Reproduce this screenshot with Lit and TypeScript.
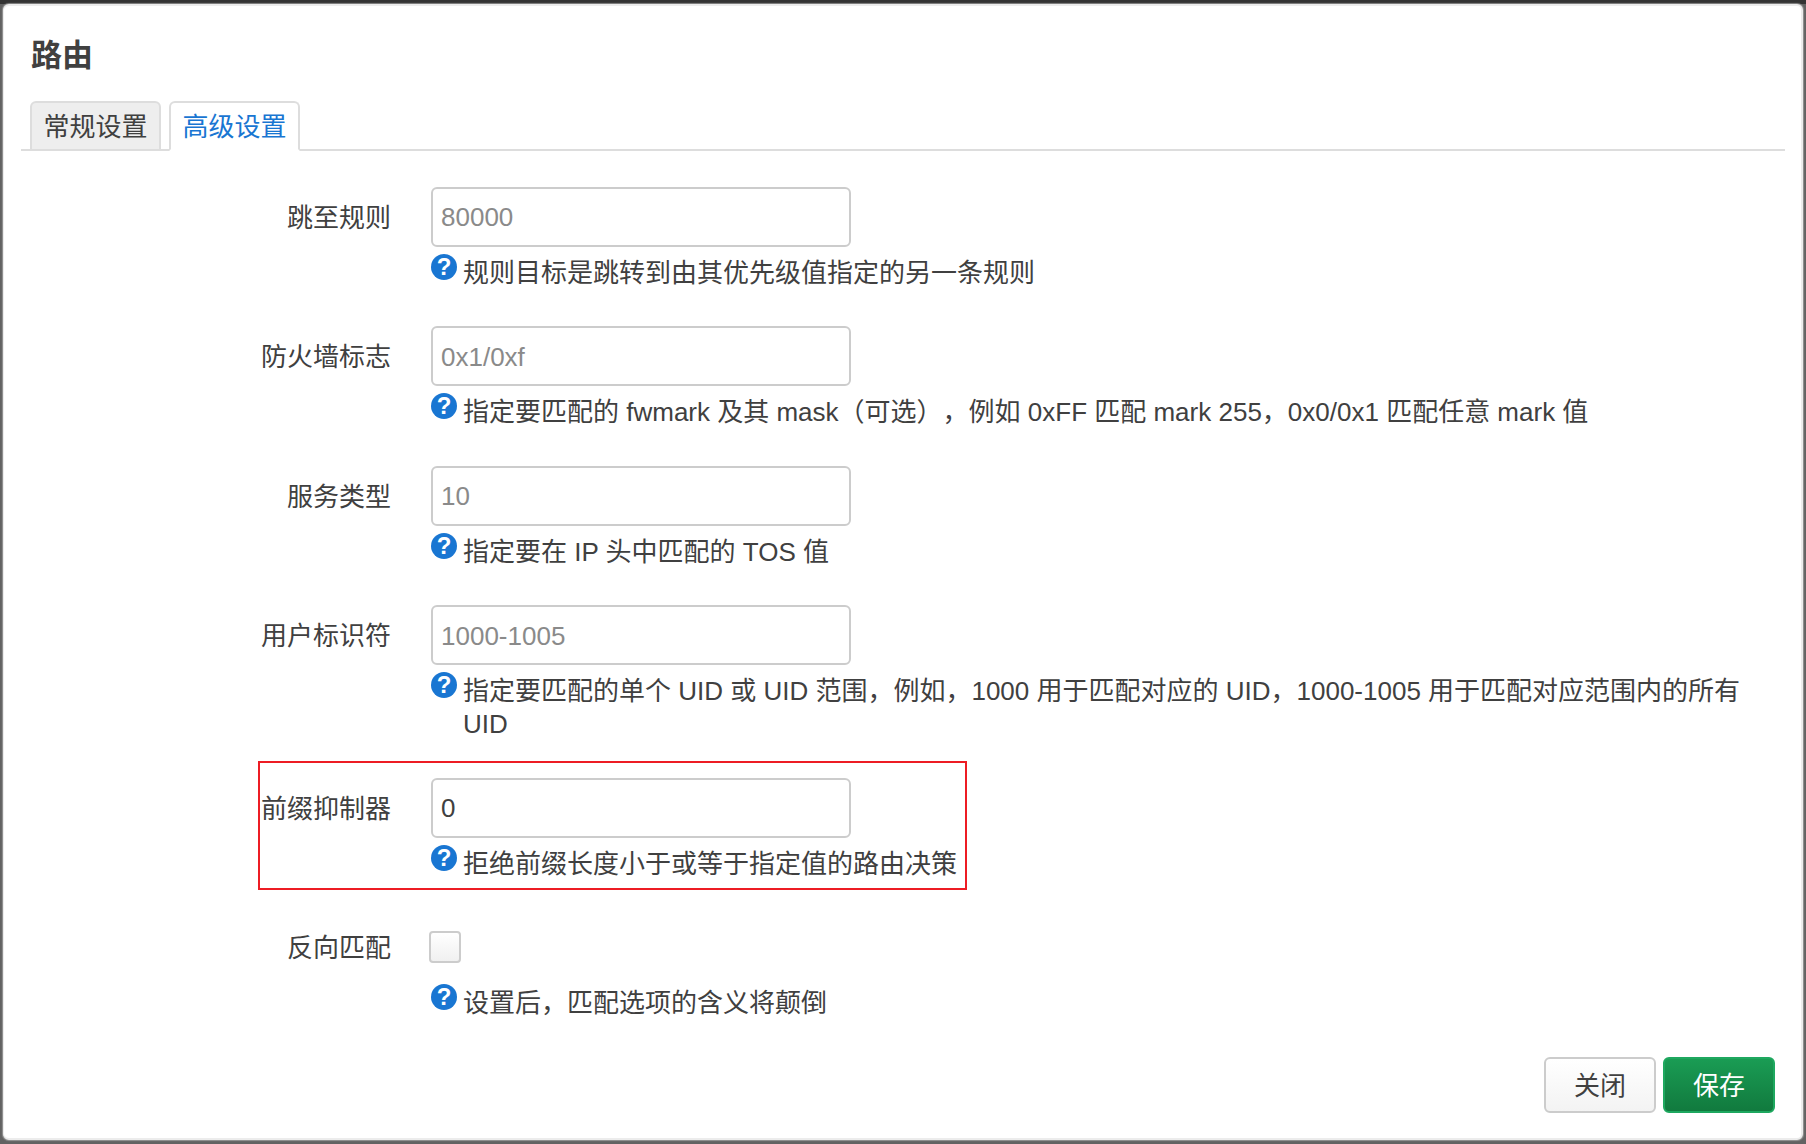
import { LitElement, html, css } from "lit";
import { customElement } from "lit/decorators.js";

interface Row {
  label: string;
  placeholder?: string;
  value?: string;
  desc: string;
  check?: boolean;
  marked?: boolean;
}

const ROWS: Row[] = [
  { label: "跳至规则", placeholder: "80000", desc: "规则目标是跳转到由其优先级值指定的另一条规则" },
  { label: "防火墙标志", placeholder: "0x1/0xf", desc: "指定要匹配的 fwmark 及其 mask（可选），例如 0xFF 匹配 mark 255，0x0/0x1 匹配任意 mark 值" },
  { label: "服务类型", placeholder: "10", desc: "指定要在 IP 头中匹配的 TOS 值" },
  { label: "用户标识符", placeholder: "1000-1005", desc: "指定要匹配的单个 UID 或 UID 范围，例如，1000 用于匹配对应的 UID，1000-1005 用于匹配对应范围内的所有 UID" },
  { label: "前缀抑制器", value: "0", desc: "拒绝前缀长度小于或等于指定值的路由决策", marked: true },
  { label: "反向匹配", check: true, desc: "设置后，匹配选项的含义将颠倒" },
];

@customElement("app-root")
export class AppRoot extends LitElement {
  static styles = css`
    :host {
      display: block;
      width: 1806px;
      height: 1144px;
      box-sizing: border-box;
      padding: 4px 3px 4px 3px;
      background: linear-gradient(#333 0, #333 4px, #626262 4px, #626262 100%);
      font-family: "Liberation Sans", "Noto Sans CJK SC", sans-serif;
      font-size: 26px;
      color: #404040;
      overflow: hidden;
      text-spacing-trim: space-all;
      font-feature-settings: "chws" 0, "halt" 0, "palt" 0;
    }
    .modal {
      height: 100%;
      box-sizing: border-box;
      background: #fff;
      border-style: solid;
      border-color: #ececec;
      border-width: 2px 2px 2px 1px;
      border-radius: 6px;
      box-shadow: 0 0 1px 1px rgba(170, 170, 170, 0.7);
      padding: 0 16px 0 17px;
      display: flex;
      flex-direction: column;
    }
    h4 {
      margin: 0;
      padding: 30px 0 0 10px;
      font-size: 31px;
      line-height: 40px;
      font-weight: 700;
      color: #404040;
    }
    .tabs {
      display: flex;
      gap: 8px;
      margin-top: 25px;
      padding-left: 9px;
      border-bottom: 2px solid #ddd;
      height: 48px;
    }
    .tab {
      width: 131px;
      height: 50px;
      box-sizing: border-box;
      border: 2px solid #ddd;
      border-radius: 6px 6px 0 0;
      background: #eee;
      text-align: center;
      line-height: 48px;
    }
    .tab.active {
      background: #fff;
      border-bottom-color: #fff;
      color: #1976d2;
    }
    .rows {
      padding-top: 35.5px;
    }
    .row {
      position: relative;
      display: grid;
      grid-template-columns: 370px 1fr;
      column-gap: 40px;
      margin-bottom: 37.17px;
    }
    .label {
      height: 60px;
      line-height: 63px;
      text-align: right;
    }
    .control {
      height: 60px;
      display: flex;
      align-items: center;
    }
    input[type="text"] {
      width: 420px;
      height: 60px;
      box-sizing: border-box;
      border: 2px solid #ccc;
      border-radius: 6px;
      padding: 2px 8px 0;
      font: inherit;
      color: #404040;
      background: #fff;
      outline: none;
    }
    input[type="text"]::placeholder {
      color: #8a8a8a;
      opacity: 1;
    }
    input[type="checkbox"] {
      appearance: none;
      width: 32px;
      height: 32px;
      margin: 0 0 0 -2px;
      box-sizing: border-box;
      border: 2px solid #ccc;
      border-radius: 4px;
      background: linear-gradient(#fff, #f0f0f0);
    }
    .desc {
      display: flex;
      gap: 6px;
      margin-top: 7px;
      line-height: 32.5px;
    }
    .help {
      flex: none;
      width: 26px;
      height: 26px;
      border-radius: 50%;
      background: #1976d2;
      color: #fff;
      font-size: 24px;
      font-weight: 700;
      line-height: 26px;
      text-align: center;
    }
    .desc-text {
      padding-top: 3px;
    }
    .mark {
      position: absolute;
      left: 237px;
      top: -17px;
      width: 709px;
      height: 129px;
      box-sizing: border-box;
      border: 2px solid #ed1c24;
      pointer-events: none;
    }
    .footer {
      display: flex;
      justify-content: flex-end;
      gap: 7px;
      margin-top: auto;
      padding: 0 10px 26px 0;
    }
    .btn {
      width: 112px;
      height: 56px;
      box-sizing: border-box;
      border: 2px solid #ccc;
      border-radius: 6px;
      background: linear-gradient(#fff, #f3f3f3);
      color: #404040;
      font: inherit;
      padding: 0 0 3px;
    }
    .btn.primary {
      border-color: #1ea85f;
      background: linear-gradient(#1a9c54, #117a3e);
      color: #fff;
    }
  `;

  private renderRow(r: Row) {
    return html`
      <div class="row">
        <div class="label">${r.label}</div>
        <div>
          <div class="control">
            ${r.check
              ? html`<input type="checkbox" />`
              : html`<input type="text" placeholder=${r.placeholder ?? ""} .value=${r.value ?? ""} />`}
          </div>
          <div class="desc">
            <span class="help">?</span>
            <span class="desc-text">${r.desc}</span>
          </div>
        </div>
        ${r.marked ? html`<div class="mark"></div>` : null}
      </div>
    `;
  }

  render() {
    return html`
      <div class="modal" lang="zh-CN">
        <h4>路由</h4>
        <div class="tabs">
          <div class="tab">常规设置</div>
          <div class="tab active">高级设置</div>
        </div>
        <div class="rows">${ROWS.map((r) => this.renderRow(r))}</div>
        <div class="footer">
          <button class="btn">关闭</button>
          <button class="btn primary">保存</button>
        </div>
      </div>
    `;
  }
}
